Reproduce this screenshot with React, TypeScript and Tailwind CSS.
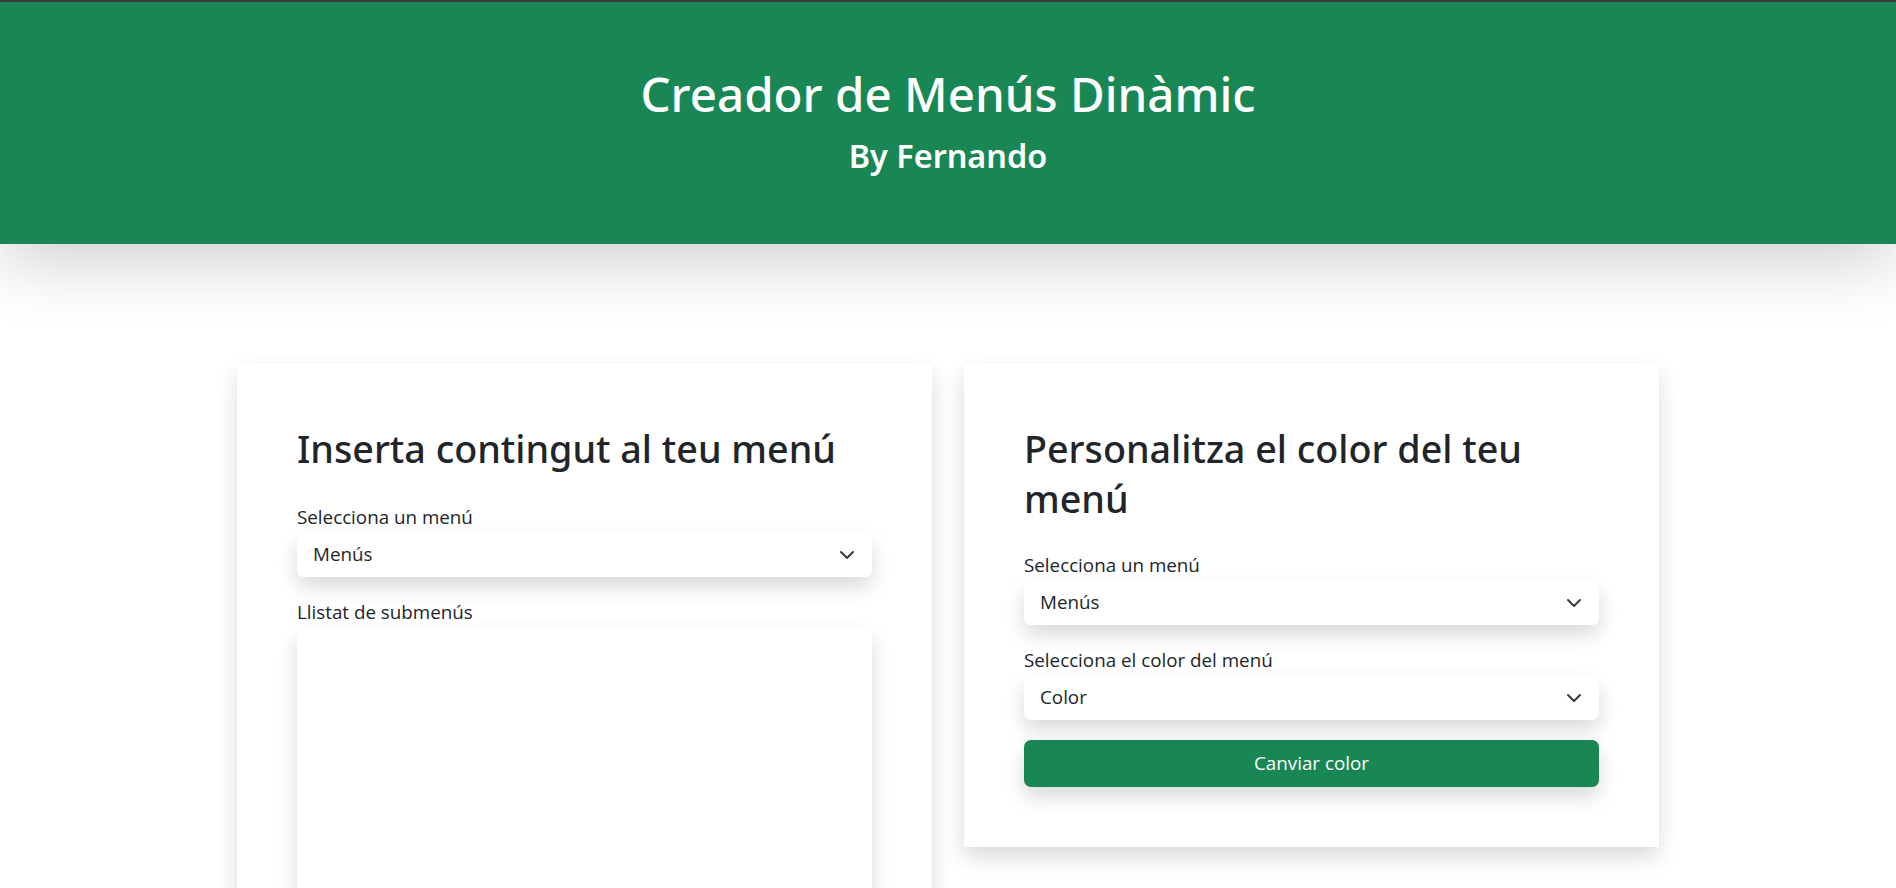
const font = { fontFamily: '"Open Sans", "Noto Sans", Arial, sans-serif' };
const headFont = { fontFamily: '"Noto Sans", "Open Sans", Arial, sans-serif' };

function SelectBox({ value }: { value: string }) {
  return (
    <div className="relative flex h-[45px] w-full items-center rounded-[7px] bg-white pl-4 pr-[17px] text-[18.8px] text-[#212529] shadow-[0_10px_20px_rgba(0,0,0,0.15)]">
      <span className="flex-1">{value}</span>
      <svg width="16" height="16" viewBox="0 0 16 16" fill="none">
        <path d="m2 5 6 6 6-6" stroke="#343a40" strokeWidth="2" strokeLinecap="round" strokeLinejoin="round" />
      </svg>
    </div>
  );
}

function Label({ children, className = '' }: { children: React.ReactNode; className?: string }) {
  return <div className={`h-[30px] text-[18.8px] leading-[30px] text-[#212529] ${className}`}>{children}</div>;
}

export default function App() {
  return (
    <div className="min-h-screen bg-white" style={font}>
      {/* Header */}
      <header className="relative z-10 border-t-2 border-[#3b3b3b] bg-[#198754] pt-[62px] pb-[69px] text-center text-white shadow-[0_20px_60px_rgba(0,0,0,0.175)]">
        <h1 className="text-[47.5px] font-medium leading-[60px]" style={headFont}>Creador de Menús Dinàmic</h1>
        <p className="mt-[11px] text-[32.4px] font-semibold leading-[40px]" style={headFont}>By Fernando</p>
      </header>

      {/* Content */}
      <main className="mx-auto mt-[120px] grid w-[1422px] grid-cols-2 items-start gap-8">
        {/* Left card */}
        <section className="bg-white p-[60px] shadow-[0_10px_20px_rgba(0,0,0,0.15)]">
          <h2 className="mb-[28px] text-[37.7px] font-medium leading-[50px] text-[#212529]" style={headFont}>
            Inserta contingut al teu menú
          </h2>
          <Label>Selecciona un menú</Label>
          <SelectBox value="Menús" />
          <Label className="mt-5">Llistat de submenús</Label>
          <textarea className="block h-[320px] w-full resize-none rounded-[7px] bg-white shadow-[0_10px_20px_rgba(0,0,0,0.15)] outline-none" />
        </section>

        {/* Right card */}
        <section className="bg-white p-[60px] shadow-[0_10px_20px_rgba(0,0,0,0.15)]">
          <h2 className="mb-[26px] text-[37.7px] font-medium leading-[50px] text-[#212529]" style={headFont}>
            Personalitza el color del teu menú
          </h2>
          <Label>Selecciona un menú</Label>
          <SelectBox value="Menús" />
          <Label className="mt-5">Selecciona el color del menú</Label>
          <SelectBox value="Color" />
          <button className="mt-5 h-[47px] w-full rounded-[7px] bg-[#198754] text-[18.8px] text-white shadow-[0_10px_20px_rgba(0,0,0,0.15)]">
            Canviar color
          </button>
        </section>
      </main>
    </div>
  );
}
